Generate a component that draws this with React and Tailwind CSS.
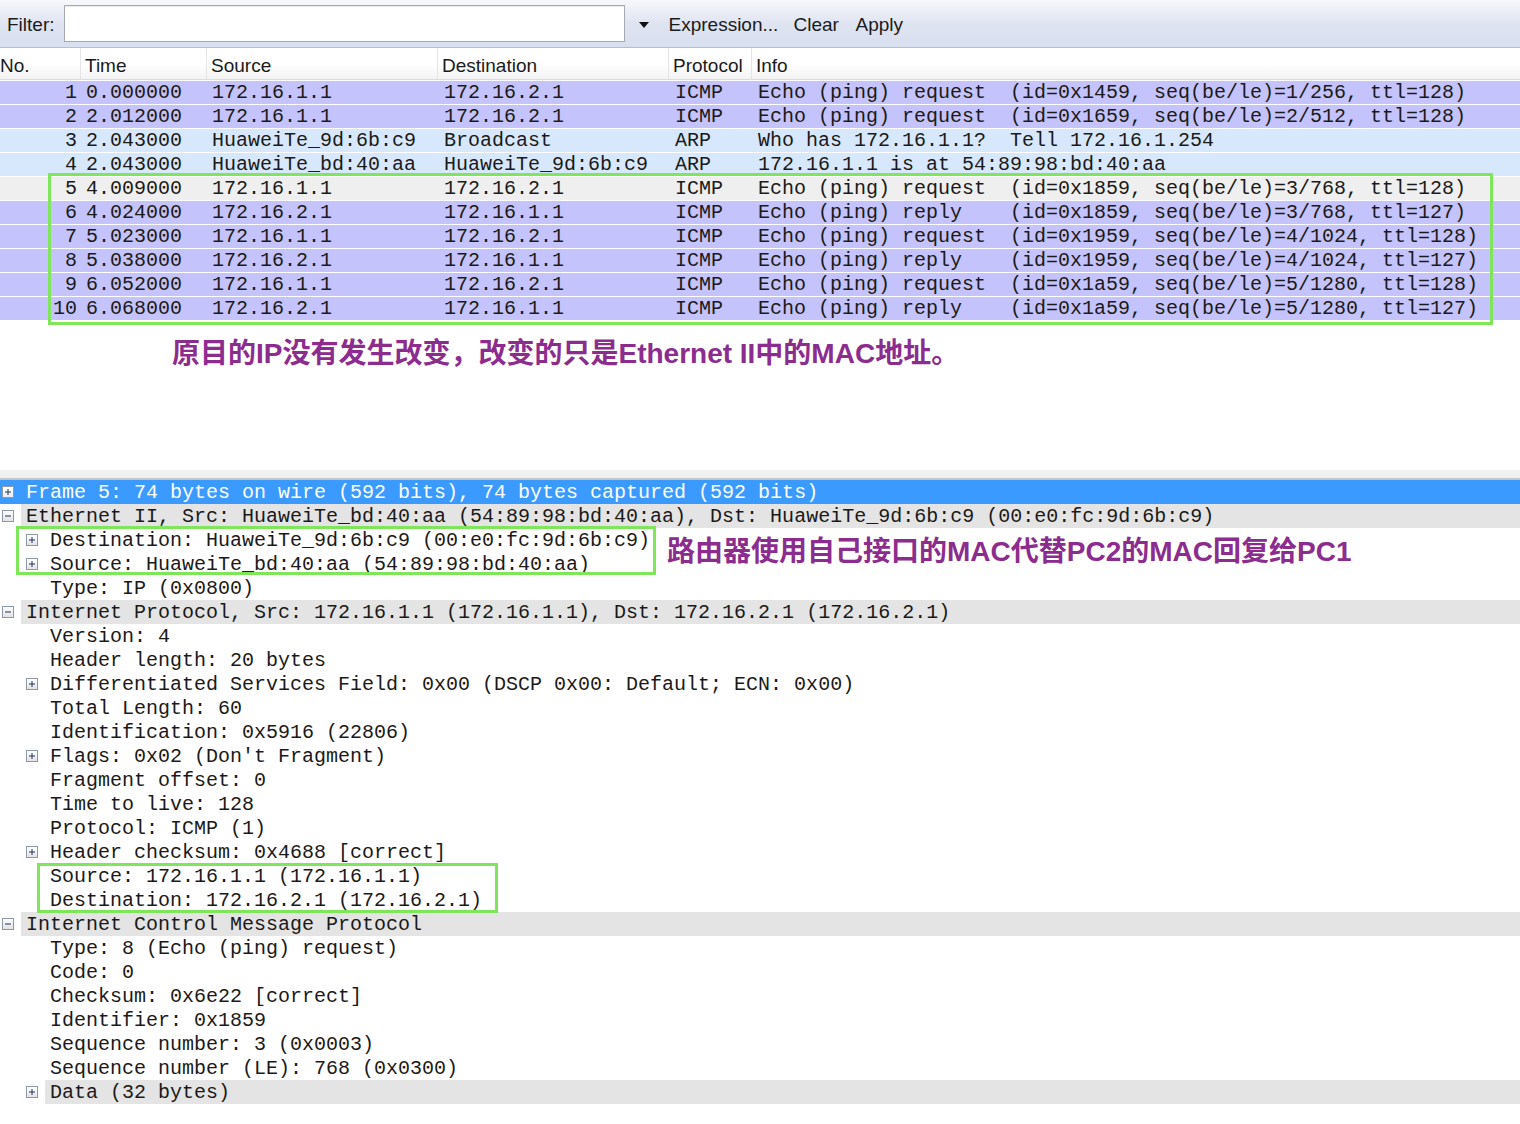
import React from "react";

const MONO = { fontFamily: '"Liberation Mono", "DejaVu Sans Mono", monospace' };

const packets = [
  { no: 1, t: "0.000000", src: "172.16.1.1", dst: "172.16.2.1", p: "ICMP", info: "Echo (ping) request  (id=0x1459, seq(be/le)=1/256, ttl=128)", k: "icmp" },
  { no: 2, t: "2.012000", src: "172.16.1.1", dst: "172.16.2.1", p: "ICMP", info: "Echo (ping) request  (id=0x1659, seq(be/le)=2/512, ttl=128)", k: "icmp" },
  { no: 3, t: "2.043000", src: "HuaweiTe_9d:6b:c9", dst: "Broadcast", p: "ARP", info: "Who has 172.16.1.1?  Tell 172.16.1.254", k: "arp" },
  { no: 4, t: "2.043000", src: "HuaweiTe_bd:40:aa", dst: "HuaweiTe_9d:6b:c9", p: "ARP", info: "172.16.1.1 is at 54:89:98:bd:40:aa", k: "arp" },
  { no: 5, t: "4.009000", src: "172.16.1.1", dst: "172.16.2.1", p: "ICMP", info: "Echo (ping) request  (id=0x1859, seq(be/le)=3/768, ttl=128)", k: "sel" },
  { no: 6, t: "4.024000", src: "172.16.2.1", dst: "172.16.1.1", p: "ICMP", info: "Echo (ping) reply    (id=0x1859, seq(be/le)=3/768, ttl=127)", k: "icmp" },
  { no: 7, t: "5.023000", src: "172.16.1.1", dst: "172.16.2.1", p: "ICMP", info: "Echo (ping) request  (id=0x1959, seq(be/le)=4/1024, ttl=128)", k: "icmp" },
  { no: 8, t: "5.038000", src: "172.16.2.1", dst: "172.16.1.1", p: "ICMP", info: "Echo (ping) reply    (id=0x1959, seq(be/le)=4/1024, ttl=127)", k: "icmp" },
  { no: 9, t: "6.052000", src: "172.16.1.1", dst: "172.16.2.1", p: "ICMP", info: "Echo (ping) request  (id=0x1a59, seq(be/le)=5/1280, ttl=128)", k: "icmp" },
  { no: 10, t: "6.068000", src: "172.16.2.1", dst: "172.16.1.1", p: "ICMP", info: "Echo (ping) reply    (id=0x1a59, seq(be/le)=5/1280, ttl=127)", k: "icmp" },
];

const rowBg = { icmp: "bg-[#c5c3fc]", arp: "bg-[#d7e8fc]", sel: "bg-[#efefef]" };

const details = [
  { l: 0, i: "plus", t: "Frame 5: 74 bytes on wire (592 bits), 74 bytes captured (592 bits)", s: "blue" },
  { l: 0, i: "minus", t: "Ethernet II, Src: HuaweiTe_bd:40:aa (54:89:98:bd:40:aa), Dst: HuaweiTe_9d:6b:c9 (00:e0:fc:9d:6b:c9)", s: "gray" },
  { l: 1, i: "plus", t: "Destination: HuaweiTe_9d:6b:c9 (00:e0:fc:9d:6b:c9)" },
  { l: 1, i: "plus", t: "Source: HuaweiTe_bd:40:aa (54:89:98:bd:40:aa)" },
  { l: 1, t: "Type: IP (0x0800)" },
  { l: 0, i: "minus", t: "Internet Protocol, Src: 172.16.1.1 (172.16.1.1), Dst: 172.16.2.1 (172.16.2.1)", s: "gray" },
  { l: 1, t: "Version: 4" },
  { l: 1, t: "Header length: 20 bytes" },
  { l: 1, i: "plus", t: "Differentiated Services Field: 0x00 (DSCP 0x00: Default; ECN: 0x00)" },
  { l: 1, t: "Total Length: 60" },
  { l: 1, t: "Identification: 0x5916 (22806)" },
  { l: 1, i: "plus", t: "Flags: 0x02 (Don't Fragment)" },
  { l: 1, t: "Fragment offset: 0" },
  { l: 1, t: "Time to live: 128" },
  { l: 1, t: "Protocol: ICMP (1)" },
  { l: 1, i: "plus", t: "Header checksum: 0x4688 [correct]" },
  { l: 1, t: "Source: 172.16.1.1 (172.16.1.1)" },
  { l: 1, t: "Destination: 172.16.2.1 (172.16.2.1)" },
  { l: 0, i: "minus", t: "Internet Control Message Protocol", s: "gray" },
  { l: 1, t: "Type: 8 (Echo (ping) request)" },
  { l: 1, t: "Code: 0" },
  { l: 1, t: "Checksum: 0x6e22 [correct]" },
  { l: 1, t: "Identifier: 0x1859" },
  { l: 1, t: "Sequence number: 3 (0x0003)" },
  { l: 1, t: "Sequence number (LE): 768 (0x0300)" },
  { l: 1, i: "plus", t: "Data (32 bytes)", s: "gray" },
];

function ExpIcon({ kind, onBlue }) {
  return (
    <svg width="12" height="12" viewBox="0 0 12 12" className="block">
      <defs>
        <linearGradient id={onBlue ? "gb" : "gg"} x1="0" y1="0" x2="0" y2="1">
          <stop offset="0" stopColor="#ffffff" />
          <stop offset="1" stopColor={onBlue ? "#e6ecf5" : "#e2e2e2"} />
        </linearGradient>
      </defs>
      <rect x="0.5" y="0.5" width="11" height="11" fill={`url(#${onBlue ? "gb" : "gg"})`} stroke="#8f9aa8" />
      <line x1="3" y1="6" x2="9" y2="6" stroke="#26325a" strokeWidth="1" />
      {kind === "plus" && <line x1="6" y1="3" x2="6" y2="9" stroke="#26325a" strokeWidth="1" />}
    </svg>
  );
}

const sans = { fontFamily: '"Liberation Sans", Arial, sans-serif' };
const cjk = { fontFamily: '"Liberation Sans", Arial, "Noto Sans CJK SC", sans-serif' };

export default function App() {
  return (
    <div className="relative w-[1520px] h-[1124px] bg-white overflow-hidden text-[#1a1a1a]">
      {/* Filter toolbar */}
      <div className="flex items-center h-[48px] border-b border-[#b9bdc9] bg-gradient-to-b from-[#f7f8fc] via-[#dfe4f1] to-[#d8dfef] text-[19px]" style={sans}>
        <span className="ml-[7px] pt-[3px]">Filter:</span>
        <div className="ml-[9px] w-[561px] h-[37px] bg-white border border-[#a6a9b2] shadow-[inset_0_1px_1px_rgba(0,0,0,0.08)]"></div>
        <svg width="10" height="6" viewBox="0 0 10 6" className="ml-[14px] mt-[2px]">
          <polygon points="0,0 10,0 5,6" fill="#111" />
        </svg>
        <span className="ml-[20px] w-[125px] pt-[3px]">Expression...</span>
        <span className="w-[62px] pt-[3px]">Clear</span>
        <span className="pt-[3px]">Apply</span>
      </div>

      {/* Column header */}
      <div className="flex h-[32px] bg-gradient-to-b from-white via-white to-[#f3f3f3] border-b border-[#dcdcdc] text-[19px]" style={sans}>
        <div className="w-[81px] flex items-center pt-[6px] border-r border-[#e4e4e4]">No.</div>
        <div className="w-[126px] flex items-center pt-[6px] pl-[4px] border-r border-[#e4e4e4]">Time</div>
        <div className="w-[231px] flex items-center pt-[6px] pl-[4px] border-r border-[#e4e4e4]">Source</div>
        <div className="w-[231px] flex items-center pt-[6px] pl-[4px] border-r border-[#e4e4e4]">Destination</div>
        <div className="w-[83px] flex items-center pt-[6px] pl-[4px] border-r border-[#e4e4e4]">Protocol</div>
        <div className="flex-1 flex items-center pt-[6px] pl-[4px]">Info</div>
      </div>

      {/* Packet list */}
      <div className="text-[20px]" style={MONO}>
        {packets.map((r) => (
          <div key={r.no} className={`flex h-[24px] items-center pt-[1px] border-t border-white whitespace-pre ${rowBg[r.k]}`}>
            <div className="w-[80px] text-right pr-[3px]">{r.no}</div>
            <div className="w-[127px] pl-[6px]">{r.t}</div>
            <div className="w-[231px] pl-[5px]">{r.src}</div>
            <div className="w-[231px] pl-[6px]">{r.dst}</div>
            <div className="w-[83px] pl-[6px]">{r.p}</div>
            <div className="flex-1 pl-[6px]">{r.info}</div>
          </div>
        ))}
      </div>

      {/* Annotation 1 */}
      <div className="h-[150px] pl-[172px] pt-[16px]">
        <div className="text-[28px] leading-[36px] font-bold text-[#8b2c8e] whitespace-nowrap" style={cjk}>
          原目的IP没有发生改变，改变的只是Ethernet II中的MAC地址。
        </div>
      </div>

      {/* Pane separator */}
      <div className="h-[8px] bg-[#f0f0f0]"></div>
      <div className="h-[2px] bg-[#c4c4c4]"></div>

      {/* Details */}
      <div className="text-[20px]" style={MONO}>
        {details.map((d, idx) => {
          const blue = d.s === "blue";
          return (
            <div key={idx} className={`flex h-[24px] whitespace-pre ${blue ? "bg-[#3a9aff] text-white" : ""}`}>
              {d.l === 1 && <div className="w-[24px]"></div>}
              <div className="w-[21px] flex items-center pl-[2px]">
                {d.i && <ExpIcon kind={d.i} onBlue={blue} />}
              </div>
              <div className={`flex-1 flex items-center pl-[5px] pt-[2px] ${d.s === "gray" ? "bg-[#e4e4e4]" : ""}`}>{d.t}</div>
            </div>
          );
        })}
      </div>

      {/* Annotation 2 (overlay on detail pane) */}
      <div className="absolute left-[667px] top-[534px] text-[28px] leading-[36px] font-bold text-[#8b2c8e] whitespace-nowrap" style={cjk}>
        路由器使用自己接口的MAC代替PC2的MAC回复给PC1
      </div>

      {/* Green highlight boxes */}
      <div className="absolute left-[48px] top-[173px] w-[1445px] h-[152px] border-[3px] border-[#7fe65c] pointer-events-none"></div>
      <div className="absolute left-[16px] top-[526px] w-[640px] h-[49px] border-[3px] border-[#7fe65c] pointer-events-none"></div>
      <div className="absolute left-[37px] top-[863px] w-[461px] h-[50px] border-[3px] border-[#7fe65c] pointer-events-none"></div>
    </div>
  );
}
